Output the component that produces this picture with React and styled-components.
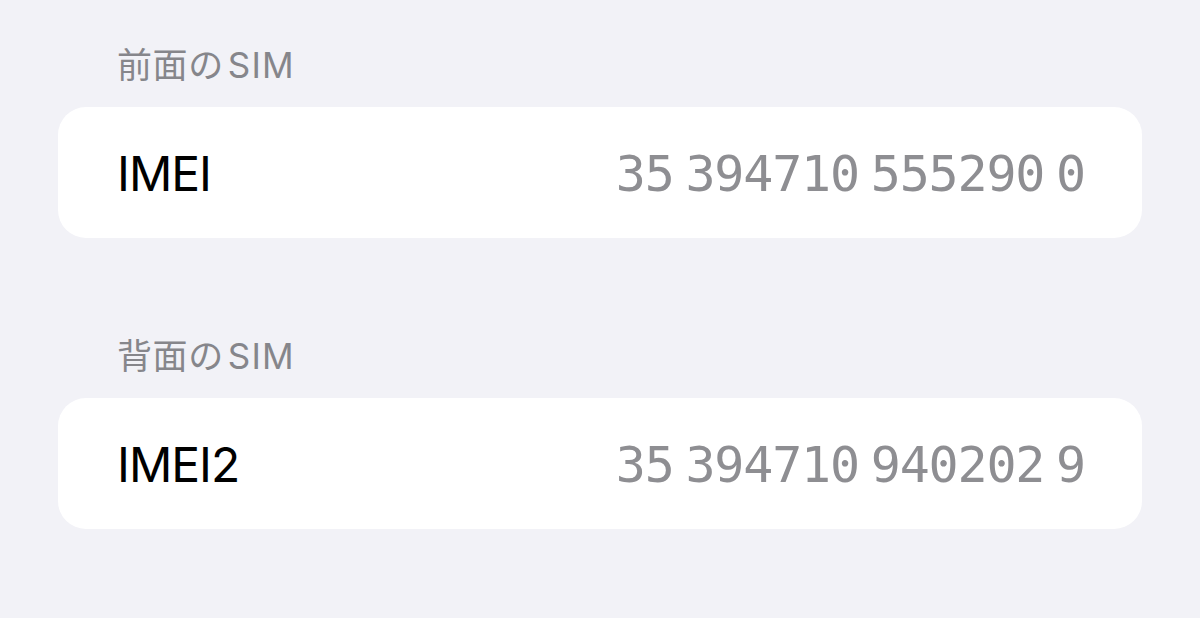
import React from "react"
import styled, { createGlobalStyle } from "styled-components"

const colors = {
  page: "#f2f2f7",
  card: "#ffffff",
  label: "#000000",
  secondary: "#8e8e92",
  header: "#86868b"
}

const GlobalStyle = createGlobalStyle`
  html, body {
    margin: 0;
    padding: 0;
    background: ${colors.page};
  }
  body {
    font-family: Inter, "Noto Sans CJK JP", sans-serif;
  }
`

const sims = [
  { title: "前面の", sim: "SIM", label: "IMEI", value: "35 394710 555290 0" },
  { title: "背面の", sim: "SIM", label: "IMEI2", value: "35 394710 940202 9" }
]

const Page = styled.main`
  width: 1200px;
  height: 618px;
  box-sizing: border-box;
  padding: 42px 58px 0;
  display: flex;
  flex-direction: column;
  gap: 95px;
  overflow: hidden;
`

const Section = styled.section`
  display: flex;
  flex-direction: column;
  gap: 19px;
`

const Header = styled.h3`
  margin: 0 0 0 59px;
  font-size: 35px;
  line-height: 46px;
  font-weight: 400;
  letter-spacing: 0.6px;
  color: ${colors.header};
  font-family: Inter, "Noto Sans CJK JP", sans-serif;
`

const Latin = styled.span`
  margin-left: 4px;
  letter-spacing: 1.2px;
`

const Card = styled.div`
  height: 131px;
  background: ${colors.card};
  border-radius: 28px;
  display: flex;
  align-items: center;
  justify-content: space-between;
  padding: 2px 57px 0 59px;
  box-sizing: border-box;
`

const Label = styled.span`
  font-size: 48px;
  color: ${colors.label};
  letter-spacing: -1px;
`

const Value = styled.span`
  font-family: "DejaVu Sans Mono", monospace;
  font-size: 50px;
  letter-spacing: -1.2px;
  word-spacing: -17px;
  color: ${colors.secondary};
`

const App = () => (
  <>
    <GlobalStyle />
    <Page>
      {sims.map(sim => (
        <Section key={sim.label}>
          <Header>
            {sim.title}
            <Latin>{sim.sim}</Latin>
          </Header>
          <Card>
            <Label>{sim.label}</Label>
            <Value>{sim.value}</Value>
          </Card>
        </Section>
      ))}
    </Page>
  </>
)

export default App
